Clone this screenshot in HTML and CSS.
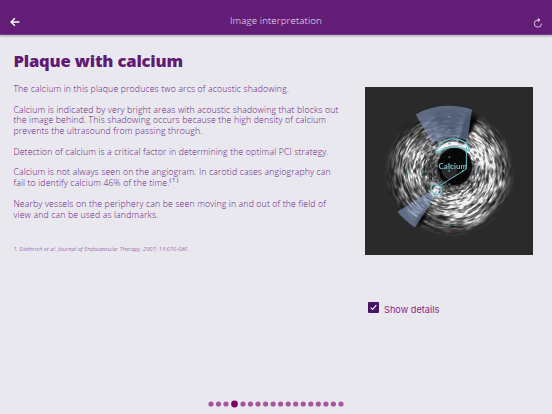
FILE: index.html
```
<!DOCTYPE html>
<html lang="en">
<head>
    <meta charset="UTF-8">
    <meta name="viewport" content="width=device-width, initial-scale=1.0">
    <title>Image interpretation</title>
    <link rel="stylesheet" href="styles.css">
</head>
<body>
    <header class="topbar">
        <svg class="icon-back" viewBox="0 0 10 10"><path d="M9.4 5H1.2M4.9 1.2L1.1 5l3.8 3.8"/></svg>
        <span class="topbar-title">Image interpretation</span>
        <svg class="icon-reload" viewBox="0 0 10 10"><path d="M8.5 5.6A3.6 3.6 0 1 1 4.9 2H6.4"/><path class="head" d="M4.9 -.2L7.4 2 4.9 4.2z"/></svg>
    </header>

    <main class="content">
        <section class="text">
            <h1>Plaque with calcium</h1>
            <p>The calcium in this plaque produces two arcs of acoustic shadowing.</p>
            <p>Calcium is indicated by very bright areas with acoustic shadowing that blocks out<br>the image behind. This shadowing occurs because the high density of calcium<br>prevents the ultrasound from passing through.</p>
            <p>Detection of calcium is a critical factor in determining the optimal PCI strategy.</p>
            <p class="with-note">Calcium is not always seen on the angiogram. In carotid cases angiography can<br>fail to identify calcium 46% of the time.<sup>(1)</sup></p>
            <p>Nearby vessels on the periphery can be seen moving in and out of the field of<br>view and can be used as landmarks.</p>
            <p class="footnote">1. Diethrich et al. Journal of Endovascular Therapy, 2007; 14:676-686</p>
        </section>

        <aside class="side">
            <div class="scan">
                <canvas id="scan" width="168" height="168"></canvas>
                <svg class="details" viewBox="0 0 168 168">
                    <g class="shadow-area">
                        <path d="M50.7 27.4Q76 13 107 22.4L102.4 54Q84 46 67.5 56.5z"/>
                        <path d="M32.4 124.7Q40 134 50 140.4L70 109.7 63 105.7z"/>
                    </g>
                    <g class="outline">
                        <path d="M71.5 66C72 48 103 47 104.3 64Q88 55 71.5 66z"/>
                        <path class="thin" d="M101.4 60V82L75 98.5"/>
                        <ellipse cx="71.2" cy="102.3" rx="5.7" ry="4.6" transform="rotate(45 71.2 102.3)"/>
                    </g>
                    <text x="73.5" y="82.2">Calcium</text>
                </svg>
            </div>
            <label class="toggle">
                <svg class="checkbox" viewBox="0 0 11 11"><rect width="11" height="11" rx="1"/><path d="M2.8 5.7l1.9 1.8 3.6-4.3"/></svg>
                <span>Show details</span>
            </label>
        </aside>
    </main>

    <nav class="pager">
        <svg viewBox="0 0 136 8">
            <circle cx="3" cy="4" r="2.6"/>
            <circle cx="10.5" cy="4" r="2.6"/>
            <circle cx="18" cy="4" r="2.6"/>
            <circle class="active" cx="26.5" cy="4" r="3.4"/>
            <circle cx="35" cy="4" r="2.6"/>
            <circle cx="42.5" cy="4" r="2.6"/>
            <circle cx="50" cy="4" r="2.6"/>
            <circle cx="57.6" cy="4" r="2.6"/>
            <circle cx="65.1" cy="4" r="2.6"/>
            <circle cx="72.6" cy="4" r="2.6"/>
            <circle cx="80.2" cy="4" r="2.6"/>
            <circle cx="87.7" cy="4" r="2.6"/>
            <circle cx="95.2" cy="4" r="2.6"/>
            <circle cx="102.8" cy="4" r="2.6"/>
            <circle cx="110.3" cy="4" r="2.6"/>
            <circle cx="117.9" cy="4" r="2.6"/>
            <circle cx="125.4" cy="4" r="2.6"/>
            <circle cx="133" cy="4" r="2.6"/>
        </svg>
    </nav>

    <script src="scan.js"></script>
</body>
</html>
```
FILE: styles.css
```
* {
    box-sizing: border-box;
}
body {
    margin: 0;
    height: 414px;
    display: flex;
    flex-direction: column;
    overflow: hidden;
    background: #e9e8ee;
    color: #651a80;
    font-family: "Open Sans", "Noto Sans", sans-serif;
}
.topbar {
    display: flex;
    align-items: flex-start;
    justify-content: space-between;
    flex: none;
    height: 35px;
    padding: 0 10px;
    background: #631d76;
    border-bottom: 1px solid #7c3b8e;
    box-shadow: 0 1px 2px rgba(60, 40, 70, 0.4);
    color: #f3e8f6;
}
.icon-back {
    width: 10px;
    height: 10px;
    margin-top: 17px;
    fill: none;
    stroke: #fff;
    stroke-width: 1.4;
}
.topbar-title {
    margin: 14px 1px 0 0;
    font-size: 9.7px;
    line-height: 14px;
    font-weight: 300;
    letter-spacing: 0.13px;
}
.icon-reload {
    width: 10px;
    height: 10px;
    margin: 18px -1px 0 0;
    overflow: visible;
    fill: none;
    stroke: #d9c4e0;
    stroke-width: 1;
}
.icon-reload .head {
    fill: #d9c4e0;
    stroke: none;
}
.content {
    display: flex;
    flex: 1;
    padding-left: 13.4px;
}
.text {
    width: 351.6px;
    white-space: nowrap;
}
h1 {
    margin: 14px 0 12.2px;
    font-size: 16.6px;
    line-height: 23px;
    font-weight: 800;
    letter-spacing: -0.17px;
    color: #611975;
}
p {
    margin: 0 0 10.4px;
    font-size: 8.7px;
    line-height: 10.4px;
    font-weight: 300;
    letter-spacing: 0.15px;
}
.with-note {
    line-height: 10.7px;
}
sup {
    font-size: 6px;
    line-height: 0;
    font-weight: 400;
    letter-spacing: 0.9px;
}
.footnote {
    margin-top: 24px;
    font-size: 5.6px;
    letter-spacing: 0.12px;
    font-style: italic;
}
.side {
    width: 168px;
    padding-top: 52px;
}
.scan {
    position: relative;
    width: 168px;
    height: 168px;
}
.scan canvas {
    display: block;
}
.details {
    position: absolute;
    inset: 0;
}
.shadow-area {
    fill: rgba(148, 170, 220, 0.5);
}
.outline {
    fill: none;
    stroke: #74c2cf;
    stroke-width: 1.4;
}
.outline .thin {
    stroke-width: 1;
}
.details text {
    font-family: Lato, sans-serif;
    font-size: 7.8px;
    font-weight: 700;
    letter-spacing: 0.15px;
    fill: #79bdca;
}
.toggle {
    display: flex;
    align-items: flex-start;
    gap: 5px;
    margin: 47px 0 0 3px;
    font-family: Inter, "Liberation Sans", sans-serif;
    font-size: 9.2px;
    line-height: 14px;
    color: #8d2685;
}
.toggle span {
    padding-top: 1px;
}
.checkbox {
    width: 11px;
    height: 11px;
    fill: #471561;
}
.checkbox path {
    fill: none;
    stroke: #fff;
    stroke-width: 1.1;
}
.pager {
    display: flex;
    justify-content: center;
    flex: none;
    margin-bottom: 6.5px;
}
.pager svg {
    width: 136px;
    height: 8px;
    fill: #a8559b;
}
.pager .active {
    fill: #7b0066;
}
```
FILE: scan.js
```
const canvas = document.getElementById('scan');
const ctx = canvas.getContext('2d');
const size = 168;
const cx = 84.3;
const cy = 83.7;

function hash(x, y) {
    const s = Math.sin(x * 127.1 + y * 311.7) * 43758.5453;
    return s - Math.floor(s);
}

// smooth noise, repeating every "period" cells around the circle
function noise(x, y, period) {
    const xi = Math.floor(x), yi = Math.floor(y);
    const fx = x - xi, fy = y - yi;
    const u = fx * fx * (3 - 2 * fx), v = fy * fy * (3 - 2 * fy);
    const a = ((xi % period) + period) % period, b = (a + 1) % period;
    const top = hash(a, yi) * (1 - u) + hash(b, yi) * u;
    const bottom = hash(a, yi + 1) * (1 - u) + hash(b, yi + 1) * u;
    return top * (1 - v) + bottom * v;
}

function smooth(a, b, x) {
    const t = Math.min(1, Math.max(0, (x - a) / (b - a)));
    return t * t * (3 - 2 * t);
}

// bright and dark patches: x, y, radius, strength
const patches = [
    [113, 57, 13, 0.45], [121, 70, 13, 0.35], [105, 119, 18, 0.5],
    [83, 115, 12, 0.4], [127, 99, 13, 0.25], [46, 58, 13, 0.3],
    [51, 75, 13, 0.25], [51, 94, 12, 0.15], [71, 102, 5, 0.5],
    [79, 98, 11, -0.25], [92, 99, 10, -0.15], [63, 81, 8, -0.25],
    [84, 33, 18, -0.3], [37, 36, 14, -0.2], [48, 127, 9, 0.1]
];

function brightness(x, y) {
    const dx = x - cx, dy = y - cy;
    const r = Math.hypot(dx, dy);
    const turn = Math.atan2(dy, dx) / (2 * Math.PI) + 0.5;
    const fine = noise(turn * 50, r * 0.75, 50);
    const mid = noise(turn * 28 + 7, r * 0.5 + 40, 28);
    const small = noise(turn * 90, r * 0.9 + 90, 90);
    let level = 0.38 - smooth(42, 64, r) * 0.14;
    for (const [px, py, pr, k] of patches) {
        level += k * Math.exp(-((x - px) ** 2 + (y - py) ** 2) / (pr * pr));
    }
    const grain = fine * 0.45 + mid * 0.25 + small * 0.3;
    let v = Math.max(0.08, level) * (0.1 + 2 * grain * grain + 0.9 * grain);

    // lumen
    const lumen = Math.hypot((x - 89.5) / 17, (y - 79) / 18.5);
    v *= 0.08 + 0.92 * smooth(0.95, 1.1, lumen);

    // edges of the acoustic shadows
    const deg = Math.atan2(dy, dx) * 180 / Math.PI;
    if (r > 27) {
        v *= 1 - 0.95 * smooth(-76, -72, deg) * (1 - smooth(-65, -59, deg));
        v *= 1 - 0.95 * smooth(115, 120, deg) * (1 - smooth(123, 127, deg)) * smooth(38, 55, r);
    }
    // calcified arc
    const arc = Math.hypot((x - 88) / 19, (y - 71) / 16);
    if (y < 68) {
        v += 0.9 * Math.exp(-(((arc - 0.92) / 0.14) ** 2)) * (1 - smooth(61, 68, y));
    }
    return Math.min(1, v);
}

const image = ctx.createImageData(size, size);
for (let y = 0; y < size; y++) {
    for (let x = 0; x < size; x++) {
        const r = Math.hypot(x - cx, y - cy);
        const inside = 1 - smooth(54, 67, r);
        let c = 42 + (brightness(x, y) * 240 - 42) * inside;
        if (Math.hypot(x - 84, y - 84) < 7.5) {
            c = 42;
        }
        const i = (y * size + x) * 4;
        image.data[i] = image.data[i + 1] = image.data[i + 2] = c;
        image.data[i + 3] = 255;
    }
}
ctx.putImageData(image, 0, 0);

// depth markers
ctx.fillStyle = '#3ba4b2';
for (let n = -4; n <= 4; n++) {
    ctx.fillRect(83.6, 83 + n * 13.5, 1.6, 1.4);
    ctx.fillRect(83.6 + n * 13.5, 83, 1.4, 1.6);
}
```
